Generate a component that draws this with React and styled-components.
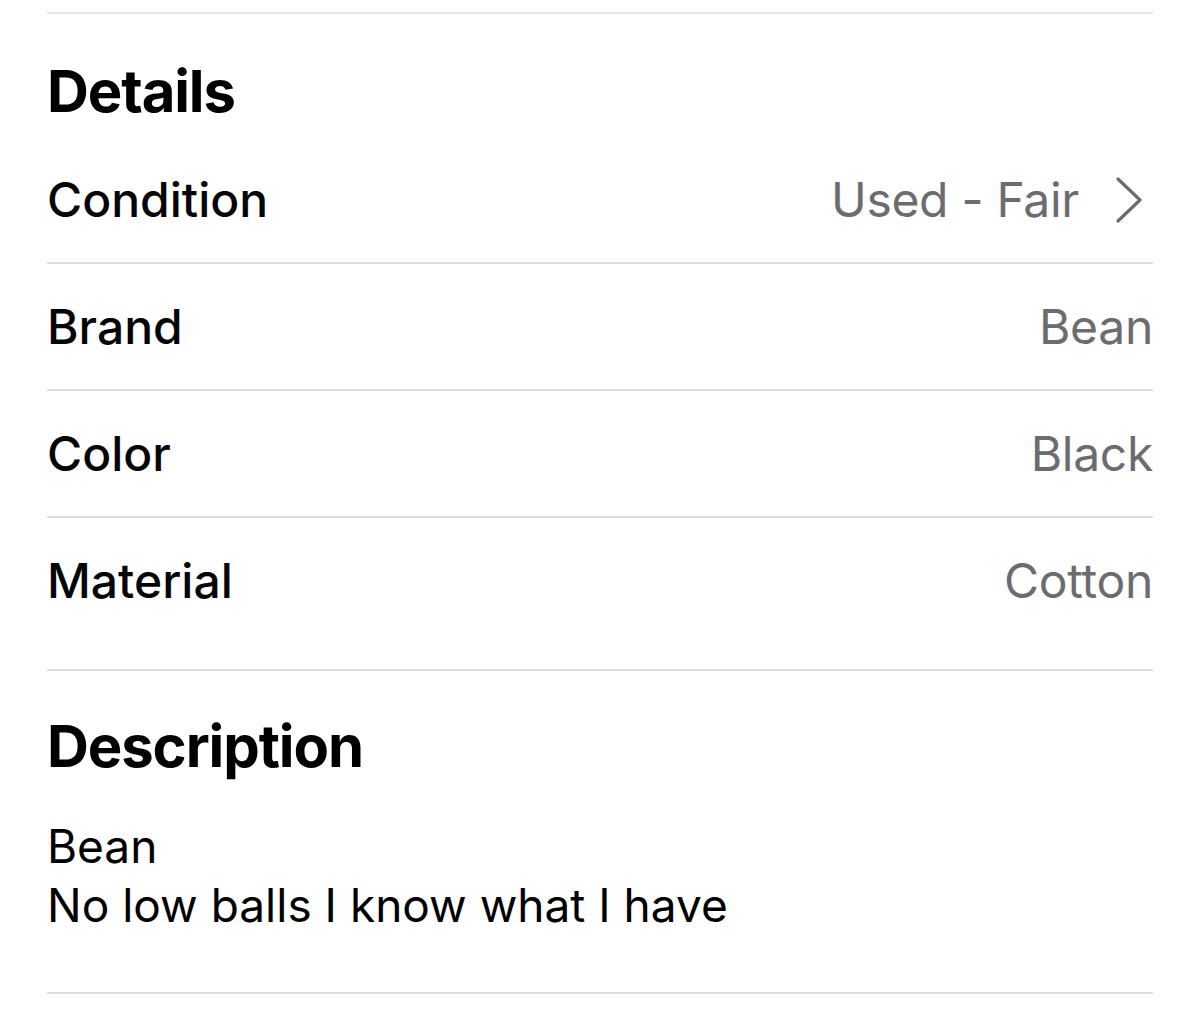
import React from 'react';
import styled, { createGlobalStyle } from 'styled-components';

const GlobalStyle = createGlobalStyle`
body{
    margin: 0;
    background: #fff;
    font-family: Inter, "Noto Sans", "Liberation Sans", sans-serif;
    -webkit-font-smoothing: antialiased;
}
`;

const Page = styled.div`
padding: 0 47px;
`;
const TopRule = styled.div`
margin-top: 12px;
border-top: 2px solid #e3e3e3;
`;
const Section = styled.section`
padding-bottom: ${props => props.pb ?? 0}px;
border-bottom: 2px solid #dcdcdc;
`;
const Heading = styled.h2`
margin: ${props => props.mt ?? 0}px 0 ${props => props.mb ?? 0}px;
font-size: 58px;
font-weight: 700;
line-height: 70px;
letter-spacing: -1.1px;
color: #000;
`;
const Row = styled.div`
display: flex;
align-items: center;
justify-content: space-between;
height: 125px;
border-bottom: 2px solid #dcdcdc;

&:last-child{
    border-bottom: none;
}
`;
const Label = styled.span`
font-size: 48px;
font-weight: 500;
color: #050505;
`;
const Value = styled.span`
display: flex;
align-items: center;
gap: 36px;
font-size: 48px;
font-weight: 400;
letter-spacing: -0.3px;
color: #6c6c70;
`;
const Chevron = styled.svg`
width: 28px;
height: 46px;
margin-right: 10px;
`;
const Body = styled.p`
margin: 36px 0 0;
font-size: 46px;
font-weight: 400;
line-height: 59px;
color: #000;
`;

const details = [
    { label: 'Condition', value: 'Used - Fair', link: true },
    { label: 'Brand', value: 'Bean' },
    { label: 'Color', value: 'Black' },
    { label: 'Material', value: 'Cotton' },
];

export default function App(){
    return (
        <Page>
            <GlobalStyle />
            <TopRule />
            <Section pb={26}>
                <Heading mt={42} mb={11}>Details</Heading>
                {details.map(item => (
                    <Row key={item.label}>
                        <Label>{item.label}</Label>
                        <Value>
                            {item.value}
                            {item.link && (
                                <Chevron viewBox="0 0 28 46" fill="none">
                                    <path d="M3 2 L25 23 L3 44" stroke="#6c6c70" strokeWidth="3.2" strokeLinecap="round" strokeLinejoin="round" />
                                </Chevron>
                            )}
                        </Value>
                    </Row>
                ))}
            </Section>
            <Section pb={57}>
                <Heading mt={40}>Description</Heading>
                <Body>
                    Bean<br />
                    No low balls I know what I have
                </Body>
            </Section>
        </Page>
    )
}
